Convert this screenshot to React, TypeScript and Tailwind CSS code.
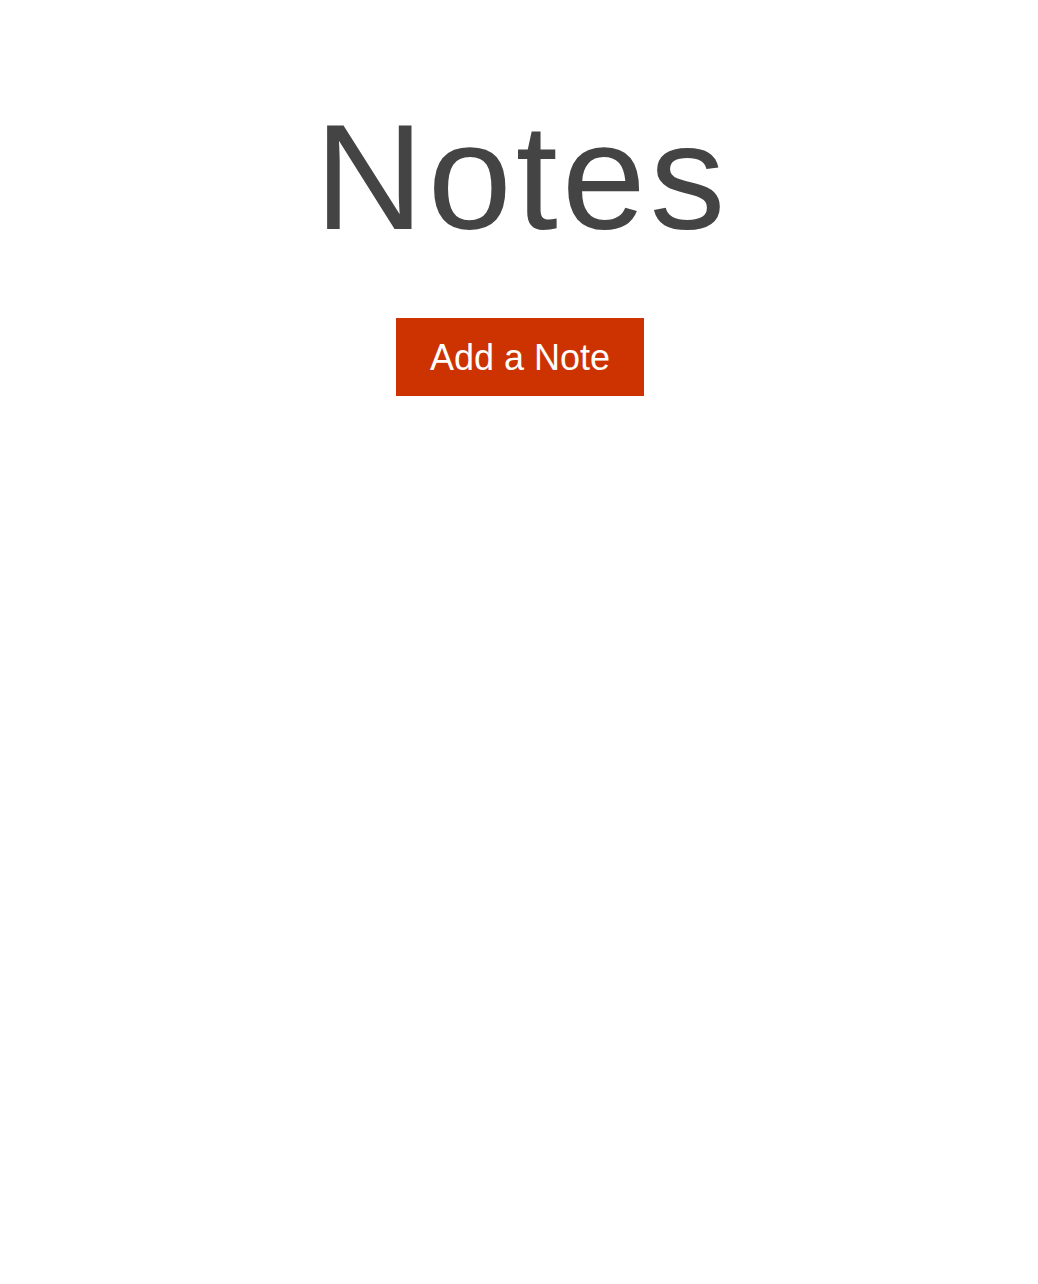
export default function App() {
  return (
    <div className="min-h-[1284px] w-full bg-white flex flex-col items-center" style={{ fontFamily: '"Liberation Sans", Arial, sans-serif' }}>
      <h1 className="mt-[102px] ml-[6px] text-[151px] leading-[150px] tracking-[4px] text-[#444444] font-normal">Notes</h1>
      <button className="mt-[66px] ml-[2px] w-[248px] h-[78px] pt-[2px] bg-[#cc3300] text-white text-[36px] leading-[36px] flex items-center justify-center">
        Add a Note
      </button>
    </div>
  );
}
